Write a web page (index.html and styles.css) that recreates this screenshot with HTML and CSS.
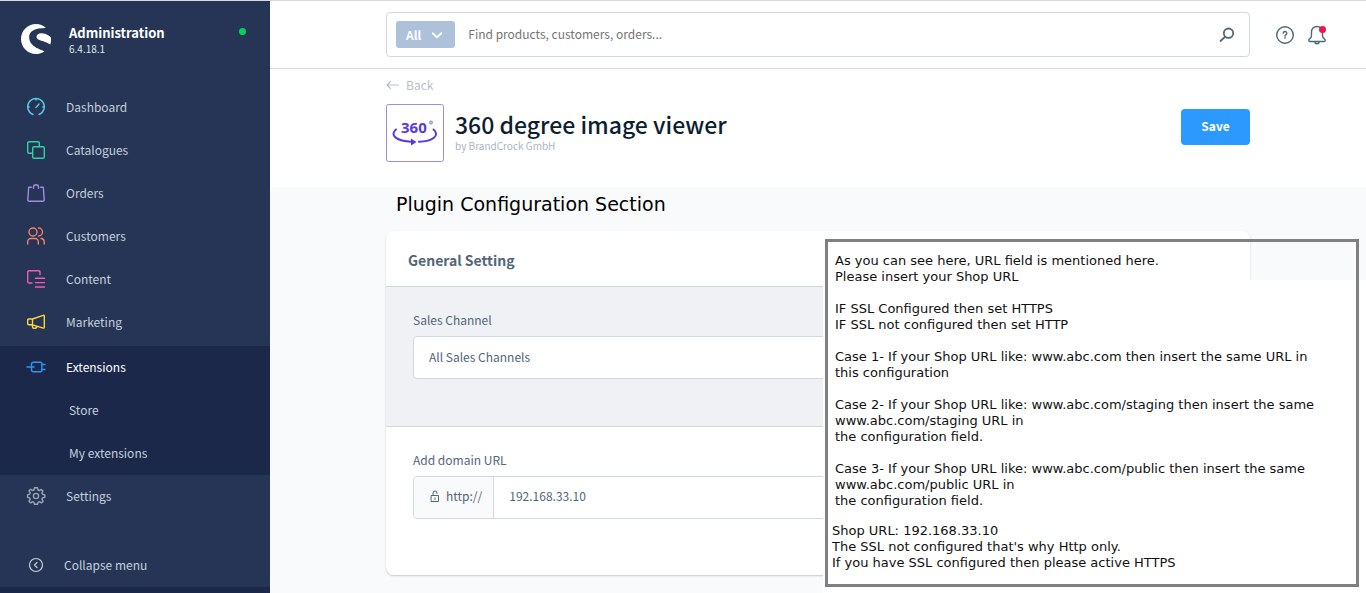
FILE: index.html
```html
<!DOCTYPE html>
<html lang="en">
<head>
<meta charset="utf-8">
<meta name="viewport" content="width=device-width, initial-scale=1">
<title>360 degree image viewer | Administration</title>
<link rel="stylesheet" href="styles.css">
</head>
<body>
<div class="app">
  <aside class="sidebar">
    <header class="brand">
      <svg class="brand-logo" viewBox="0 0 30 30" aria-hidden="true"><path fill="#fff" d="M24.800 4.100C22.300 1.500 18.800 0 15 0 6.700 0 0 6.700 0 15s6.700 15 15 15c3 0 6-.9 8.500-2.800C20 25.600 8.200 22.600 8.200 13.200 8.200 7 14 4.200 24.800 4.100zM29.800 13.200C27 10.500 23.500 9.200 20.500 9.200c-3.300 0-5 1.600-5 3.600 0 3 4 3.500 7.500 4.800 2.500.9 4.500 1.800 6.300 3 .8-2.500.9-5 .5-7.400z"/></svg>
      <div class="brand-text">
        <strong class="brand-name">Administration</strong>
        <span class="brand-version">6.4.18.1</span>
      </div>
      <span class="brand-status"></span>
    </header>
    <nav class="nav">
      <a class="nav-item" href="#"><svg class="icon cyan" viewBox="0 0 18 18"><path d="M6 16.500A8.300 8.300 0 1 1 12 16.500M9 .8v1.200M1 9h1.200M15.800 9h1.200M9 9.500l3-3.500"/></svg>Dashboard</a>
      <a class="nav-item" href="#"><svg class="icon green" viewBox="0 0 18 18"><path d="M5.500 12.200H2A1.300 1.300 0 0 1 .7 11V2A1.300 1.300 0 0 1 2 .7h9A1.300 1.300 0 0 1 12.300 2v3.500"/><rect x="5.700" y="5.700" width="11.600" height="11.600" rx="1.300"/></svg>Catalogues</a>
      <a class="nav-item" href="#"><svg class="icon purple" viewBox="0 0 18 18"><path d="M4.500 3.200H1.700L.8 15.500a1.500 1.500 0 0 0 1.500 1.800h13.400a1.500 1.500 0 0 0 1.500-1.800L16.300 3.200h-2.800M6.500 4.300V3a2.500 2.300 0 0 1 5 0v1.300"/></svg>Orders</a>
      <a class="nav-item" href="#"><svg class="icon orange" viewBox="0 0 18 18"><circle cx="6" cy="5" r="4"/><path d="M11.500 1a4 4 0 0 1 0 8M.7 17v-2.500a3 3 0 0 1 3-3h4.600a3 3 0 0 1 3 3V17M14 11.500a3.300 3.300 0 0 1 3.200 3.200V17"/></svg>Customers</a>
      <a class="nav-item" href="#"><svg class="icon pink" viewBox="0 0 18 18"><path d="M5 13H2A1.300 1.300 0 0 1 .7 11.700V2A1.300 1.300 0 0 1 2 .7h9.700A1.300 1.300 0 0 1 13 2v2.500M8.500 8.200h9M8.500 12.600h9M8.500 17h9"/></svg>Content</a>
      <a class="nav-item" href="#"><svg class="icon yellow" viewBox="0 0 18 18"><path d="M5.500 6L16.200 2.300a.8.8 0 0 1 1.100.8v11.200a.8.800 0 0 1-1 .8L5.500 11.800zM5.500 6H1.700a1 1 0 0 0-1 1v3.800a1 1 0 0 0 1 1h3.800M5.500 12v1.800c0 2 4 2.400 4.300-.4"/></svg>Marketing</a>
      <div class="nav-group">
        <a class="nav-item active" href="#"><svg class="icon blue" viewBox="0 0 18 18"><path d="M0 9h4.500M6.500 4.200h7a1.300 1.300 0 0 1 1.300 1.300v7a1.300 1.300 0 0 1-1.300 1.300h-7a2 2 0 0 1-2-2V6.200a2 2 0 0 1 2-2zM5 9h2M15 6.500h3M15 11.500h3"/></svg>Extensions</a>
        <a class="nav-item sub" href="#">Store</a>
        <a class="nav-item sub" href="#">My extensions</a>
      </div>
      <a class="nav-item" href="#"><svg class="icon gray" viewBox="0 0 18 18"><circle cx="9" cy="9" r="2.600"/><path d="M7.500.8h3l.5 2.200 1.300.6 2-1.200 1.600 1.600-1 2 .6 1.300 2.300.6v2.400l-2.300.6-.6 1.300 1.200 2-1.700 1.700-2-1.200-1.300.6-.6 2h-3l-.5-2-1.300-.6-2 1.200L2 14.200l1.200-2-.6-1.300-2-.6V7.800l2-.6.6-1.300-1.200-2 1.600-1.600 2 1.200L7 3z"/></svg>Settings</a>
    </nav>
    <button class="collapse" type="button"><svg class="icon light" viewBox="0 0 18 18"><circle cx="9" cy="9" r="6.500"/><path d="M10 6.500L7.500 9l2.500 2.500"/></svg>Collapse menu</button>
    <div class="sidebar-foot"></div>
  </aside>

  <main class="main">
    <header class="topbar">
      <form class="search">
        <button class="search-type" type="button">All<svg viewBox="0 0 10 10" aria-hidden="true"><path d="M1.500 3.500L5 7l3.500-3.500"/></svg></button>
        <input class="search-input" type="text" aria-label="Search" placeholder="Find products, customers, orders...">
        <svg class="search-icon" viewBox="0 0 16 16" aria-hidden="true"><circle cx="9.500" cy="6.200" r="4.700"/><path d="M6 9.800L1.500 14"/></svg>
      </form>
      <div class="actions">
        <button class="icon-button" type="button" aria-label="Help"><svg class="icon" viewBox="0 0 18 18"><circle cx="9" cy="9" r="8.300"/><path d="M7.200 7.300a1.800 1.800 0 1 1 2.600 1.600c-.6.300-.8.600-.8 1.300M9 11.700v.6"/></svg></button>
        <button class="icon-button" type="button" aria-label="Notifications"><svg class="icon" viewBox="0 0 18 18"><path d="M2 15.500h14c1.600 0 1.600-1.800.4-2.600-1.200-.8-1.900-1.700-1.900-3.400V6a5.500 5.500 0 0 0-11 0v3.500c0 1.700-.7 2.600-1.900 3.400C.4 13.700.4 15.500 2 15.500zM7 16.200a2 1.500 0 0 0 4 0"/></svg><span class="badge"></span></button>
      </div>
    </header>

    <section class="page-head">
      <div class="column">
        <a class="back" href="#"><svg viewBox="0 0 14 10" aria-hidden="true"><path d="M12.500 5H1M4.500 1.500L1 5l3.500 3.500"/></svg>Back</a>
        <div class="head-row">
          <svg class="plugin-icon" viewBox="0 0 58 58" role="img" aria-label="360 degrees">
            <rect x=".5" y=".5" width="57" height="57" rx="2" fill="#fff" stroke="#998de9"/>
            <text class="plugin-icon-text" x="15" y="29">360</text>
            <circle cx="45" cy="18.500" r="1.500" fill="#c9c0f5" stroke="#8f82ea"/>
            <g fill="none" stroke="#5938df" stroke-width="2" stroke-linecap="round"><path d="M10 25.500c-7 6 1 11.500 15.500 12.200M47.500 25.500c7 6-1 11.800-14.500 12.200"/></g>
            <path fill="#5938df" d="M25 34.500l5.500 3.500-5.500 3.500z"/>
          </svg>
          <div class="head-text">
            <h1 class="title">360 degree image viewer</h1>
            <p class="author">by BrandCrock GmbH</p>
          </div>
          <button class="save" type="button">Save</button>
        </div>
      </div>
    </section>

    <section class="content">
      <div class="column">
        <h2 class="section-title">Plugin Configuration Section</h2>
        <div class="card">
          <h3 class="card-title">General Setting</h3>
          <div class="card-block channel">
            <label class="label" for="channel">Sales Channel</label>
            <select class="field" id="channel"><option>All Sales Channels</option></select>
          </div>
          <div class="card-block">
            <label class="label" for="domain">Add domain URL</label>
            <div class="url-field">
              <span class="prefix"><svg viewBox="0 0 10 12" aria-hidden="true"><path d="M1.500 5.500h7v6h-7zM3 5.500V3a2 2 0 0 1 4 0v.5M5 8v1.500"/></svg>http://</span>
              <input class="url-input" id="domain" type="text" value="192.168.33.10">
            </div>
          </div>
        </div>
      </div>
    </section>
  </main>

  <aside class="note">
    <div class="note-box">
      <div class="note-main">
        <p>As you can see here, URL field is mentioned here.<br>Please insert your Shop URL</p>
        <p>IF SSL Configured then set HTTPS<br>IF SSL not configured then set HTTP</p>
        <p>Case 1- If your Shop URL like: www.abc.com then insert the same URL in<br>this configuration</p>
        <p>Case 2- If your Shop URL like: www.abc.com/staging then insert the same<br>www.abc.com/staging URL in<br>the configuration field.</p>
        <p>Case 3- If your Shop URL like: www.abc.com/public then insert the same<br>www.abc.com/public URL in<br>the configuration field.</p>
      </div>
      <p class="note-foot">Shop URL: 192.168.33.10<br>The SSL not configured that's why Http only.<br>If you have SSL configured then please active HTTPS</p>
    </div>
  </aside>
</div>
</body>
</html>
```
FILE: styles.css
```css
* { box-sizing: border-box; }

body {
  margin: 0;
  font-family: "Noto Sans CJK SC", "Noto Sans", sans-serif;
  font-size: 12px;
  line-height: 20px;
  color: #52667a;
}

h1, h2, h3, p { margin: 0; }
a { color: inherit; text-decoration: none; }
button, input, select { font: inherit; color: inherit; }
button { border: 0; background: none; padding: 0; cursor: pointer; }

.app {
  position: relative;
  display: flex;
  height: 100vh;
  overflow: hidden;
  border-top: 1px solid #d8dadb;
}

/* Sidebar */
.sidebar {
  flex: 0 0 270px;
  display: flex;
  flex-direction: column;
  background: #263555;
  color: #c3cfdd;
}

.brand {
  display: flex;
  align-items: flex-start;
  gap: 18px;
  height: 85px;
  padding: 23px 24px 0 21px;
}
.brand-logo { width: 30px; height: 30px; }
.brand-text { flex: 1; display: flex; flex-direction: column; color: #fff; }
.brand-name { font-size: 13px; line-height: 18px; }
.brand-version { font-size: 10px; line-height: 14px; color: #dfe5ec; }
.brand-status { width: 7px; height: 7px; margin-top: 4px; border-radius: 50%; background: #00d453; }

.icon { width: 18px; height: 18px; overflow: visible; }
.icon, .search-icon, .search-type svg, .back svg, .prefix svg {
  fill: none;
  stroke: currentColor;
  stroke-width: 1.4;
  stroke-linecap: round;
  stroke-linejoin: round;
}
.cyan { color: #57c7e0; }
.green { color: #2fd49b; }
.purple { color: #a48ae0; }
.orange { color: #f08268; }
.pink { color: #f45bb0; }
.yellow { color: #ffd53d; }
.blue { color: #2b95f5; }
.gray { color: #9aa8b5; }
.light { color: #c3cfdd; stroke-width: 1.2; }

.nav { flex: 1; }
.nav-item {
  display: flex;
  align-items: center;
  gap: 21px;
  height: 43px;
  padding: 0 0 2px 27px;
}
.nav-group { margin-top: 2px; background: #1b284a; }
.nav-item.active { color: #fff; }
.nav-item.sub { padding-left: 69px; }
.collapse {
  display: flex;
  align-items: center;
  gap: 19px;
  height: 43px;
  padding: 0 0 2px 27px;
  text-align: left;
}
.sidebar-foot { height: 6px; background: #1b284a; }

/* Top bar */
.main { flex: 1; min-width: 0; display: flex; flex-direction: column; }

.topbar {
  display: grid;
  grid-template-columns: 1fr minmax(0, 864px) 1fr;
  align-items: center;
  height: 68px;
  flex: none;
  border-bottom: 1px solid #d6dde5;
}
.search {
  grid-column: 2;
  display: flex;
  align-items: center;
  height: 45px;
  padding: 0 14px 0 9px;
  border: 1px solid #d1d9e0;
  border-radius: 4px;
}
.search-type {
  display: flex;
  align-items: center;
  gap: 10px;
  height: 27px;
  padding: 0 12px 0 10px;
  border-radius: 3px;
  background: #adc1db;
  color: #fff;
  font-weight: 700;
}
.search-type svg { width: 12px; height: 12px; stroke-width: 1.6; }
.search-input { flex: 1; min-width: 0; height: 30px; padding: 0 13px 2px; border: 0; outline: 0; background: none; }
.search-input::placeholder { color: #757575; opacity: 1; }
.search-icon { width: 16px; height: 16px; stroke: #52667a; stroke-width: 1.8; }
.actions { display: flex; gap: 14px; padding-left: 26px; color: #52667a; }
.icon-button { position: relative; display: flex; }
.badge { position: absolute; top: 0; right: 0; width: 7px; height: 7px; border-radius: 50%; background: #e8174f; }

/* Page header */
.column { width: 100%; max-width: 864px; margin: 0 auto; }
.page-head { flex: none; padding: 6px 0 25px; background: #fff; }
.back { display: flex; align-items: center; gap: 6px; width: max-content; color: #b6c1cb; }
.back svg { width: 14px; height: 10px; stroke-width: 1.2; }
.head-row { display: flex; align-items: flex-start; gap: 11px; margin-top: 9px; }
.plugin-icon { width: 58px; height: 58px; }
.plugin-icon-text { font: 700 15px "Open Sans", sans-serif; fill: #5938df; }
.head-text { flex: 1; padding-top: 4px; }
.title { font-size: 23px; font-weight: 500; line-height: 32px; color: #0c1e2f; }
.author { font-size: 10px; line-height: 12px; color: #a9b6c2; }
.save {
  width: 69px;
  height: 36px;
  margin-top: 5px;
  padding-bottom: 3px;
  border-radius: 4px;
  background: #2b99ff;
  color: #fff;
  font-weight: 700;
}

/* Content */
.content { flex: 1; padding: 4px 0; background: #f9fafb; }
.section-title {
  padding-left: 10px;
  font-family: "DejaVu Sans", sans-serif;
  font-size: 19px;
  font-weight: 400;
  line-height: 26px;
  color: #000;
}
.card {
  margin-top: 14px;
  overflow: hidden;
  border-radius: 8px;
  background: #fff;
  box-shadow: 0 1px 2px rgba(0, 0, 0, .2);
}
.card-title {
  padding: 19px 22px 16px;
  font-size: 14px;
  font-weight: 700;
  line-height: 20px;
  color: #52667a;
}
.card-block { padding: 23px 27px 56px; }
.card-block.channel { padding-bottom: 47px; border-top: 1px solid #cfd8e0; border-bottom: 1px solid #cfd8e0; background: #f0f1f5; }
.label { display: block; margin-bottom: 6px; }
.field {
  width: 100%;
  height: 43px;
  padding: 0 15px 2px;
  appearance: none;
  border: 1px solid #d1d9e0;
  border-radius: 4px;
  background: #fff;
}
.url-field { display: flex; height: 43px; overflow: hidden; border: 1px solid #d1d9e0; border-radius: 4px; background: #fff; }
.prefix { display: flex; align-items: center; gap: 6px; padding: 0 11px 3px 16px; border-right: 1px solid #d1d9e0; background: #f9fafb; }
.prefix svg { width: 10px; height: 12px; stroke-width: 1; }
.url-input { flex: 1; min-width: 0; padding: 0 15px 3px; border: 0; outline: 0; background: none; }

/* Annotation laid over the page */
.note {
  position: absolute;
  top: 238px;
  right: 0;
  bottom: 0;
  width: 543px;
  padding: 0 7px 0 2px;
  background: linear-gradient(transparent 41px, #fff 41px);
}
.note-box {
  padding: 11px 7px 13px;
  border: 3px solid #808080;
  font: 13px/16px "DejaVu Sans", sans-serif;
  white-space: nowrap;
  color: #111;
}
.note-main { display: grid; gap: 16px; }
.note-foot { margin: 14px 0 0 -3px; }
```
